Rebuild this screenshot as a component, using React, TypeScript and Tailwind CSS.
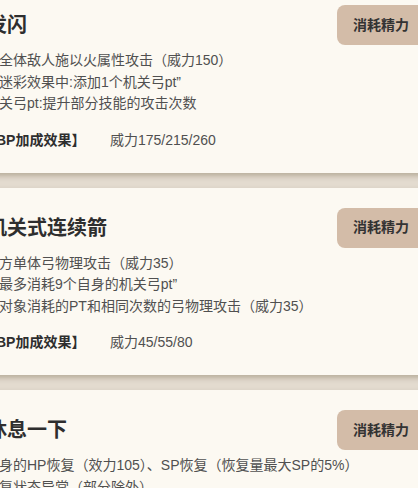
import React from "react";

type Skill = {
  title: string;
  lines: string[];
  bp: string;
  showBp: boolean;
};

const skills: Skill[] = [
  {
    title: "发闪",
    lines: [
      "对全体敌人施以火属性攻击（威力150）",
      "※迷彩效果中:添加1个机关弓pt”",
      "机关弓pt:提升部分技能的攻击次数",
    ],
    bp: "威力175/215/260",
    showBp: true,
  },
  {
    title: "机关式连续箭",
    lines: [
      "敌方单体弓物理攻击（威力35）",
      "※最多消耗9个自身的机关弓pt”",
      "向对象消耗的PT和相同次数的弓物理攻击（威力35）",
    ],
    bp: "威力45/55/80",
    showBp: true,
  },
  {
    title: "休息一下",
    lines: [
      "自身的HP恢复（效力105）、SP恢复（恢复量最大SP的5%）",
      "恢复状态异常（部分除外）",
    ],
    bp: "",
    showBp: false,
  },
];

function Card({ s }: { s: Skill }) {
  return (
    <div className="bg-[#fcf9f2] pl-[20px] pr-[20px] pt-[20px] pb-[22px] shadow-[0_3px_5px_rgba(80,60,30,0.28)]">
      <div className="flex items-center h-[40px]">
        <div className="flex-1 text-[20px] leading-[28px] font-bold text-[#2e2e2e]">{s.title}</div>
        <div className="shrink-0 h-[40px] px-[16px] flex items-center rounded-[8px] bg-[#d3bca8] text-[14px] font-semibold text-[#333]">
          消耗精力
        </div>
      </div>
      <div className="mt-[5px] -ml-[2px] text-[14px] leading-[21.5px] text-[#505050] whitespace-nowrap">
        {s.lines.map((l, i) => (
          <div key={i}>{l}</div>
        ))}
      </div>
      {s.showBp && (
        <div className="mt-[15px] flex items-center text-[14px] leading-[21px] whitespace-nowrap -ml-[5px]">
          <span className="w-[128px] font-bold text-[#2e2e2e]">【BP加成效果】</span>
          <span className="text-[#505050]">{s.bp}</span>
        </div>
      )}
    </div>
  );
}

export default function App() {
  return (
    <div
      className="w-[418px] h-[488px] overflow-hidden bg-[#e3dbcf]"
      style={{ fontFamily: '"Liberation Sans", "Noto Sans CJK SC", sans-serif' }}
    >
      <div className="w-[478px] -ml-[33px] -mt-[15px] flex flex-col gap-[15px]">
        {skills.map((s, i) => (
          <Card key={i} s={s} />
        ))}
      </div>
    </div>
  );
}
